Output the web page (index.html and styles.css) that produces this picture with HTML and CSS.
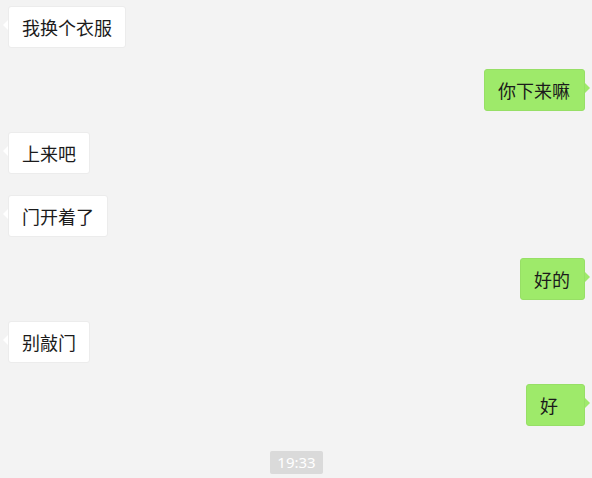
FILE: index.html
```html
<!DOCTYPE html>
<html lang="zh-CN">
<head>
    <meta charset="UTF-8">
    <meta name="viewport" content="width=device-width, initial-scale=1.0">
    <title>聊天</title>
    <link rel="stylesheet" href="styles.css">
</head>
<body>
    <div class="chat">
        <div class="row left"><div class="bubble">我换个衣服</div></div>
        <div class="row right"><div class="bubble">你下来嘛</div></div>
        <div class="row left"><div class="bubble">上来吧</div></div>
        <div class="row left"><div class="bubble">门开着了</div></div>
        <div class="row right"><div class="bubble">好的</div></div>
        <div class="row left"><div class="bubble">别敲门</div></div>
        <div class="row right"><div class="bubble">好</div></div>
        <div class="time"><span>19:33</span></div>
    </div>
</body>
</html>
```

FILE: styles.css
```css
body {
    margin: 0;
    background: #f3f3f3;
    font-family: "Microsoft YaHei", "Noto Sans CJK SC", sans-serif;
}

.chat {
    display: flex;
    flex-direction: column;
    gap: 21px;
    padding: 6px 7px 0 8px;
}

.row {
    display: flex;
}

.row.right {
    justify-content: flex-end;
}

.bubble {
    position: relative;
    box-sizing: border-box;
    height: 42px;
    min-width: 59px;
    line-height: 41px;
    padding: 0 13px;
    font-size: 18px;
    color: #1b1b1b;
    border-radius: 3px;
}

.left .bubble {
    background: #fff;
    border: 1px solid #ececec;
}

.right .bubble {
    background: #9eea6a;
    border: 1px solid #97df66;
    padding: 0 14px 0 13px;
}

.bubble::before {
    content: "";
    position: absolute;
    top: 13px;
    border-top: 5px solid transparent;
    border-bottom: 5px solid transparent;
}

.left .bubble::before {
    left: -6px;
    border-right: 5px solid #fff;
}

.right .bubble::before {
    right: -6px;
    border-left: 5px solid #9eea6a;
}

.time {
    display: flex;
    justify-content: center;
    margin-top: 4px;
}

.time span {
    background: #dadada;
    color: #fff;
    font-family: "Microsoft YaHei", "Noto Sans", sans-serif;
    font-size: 15px;
    line-height: 23px;
    padding: 0 7px;
    border-radius: 2px;
}
```
